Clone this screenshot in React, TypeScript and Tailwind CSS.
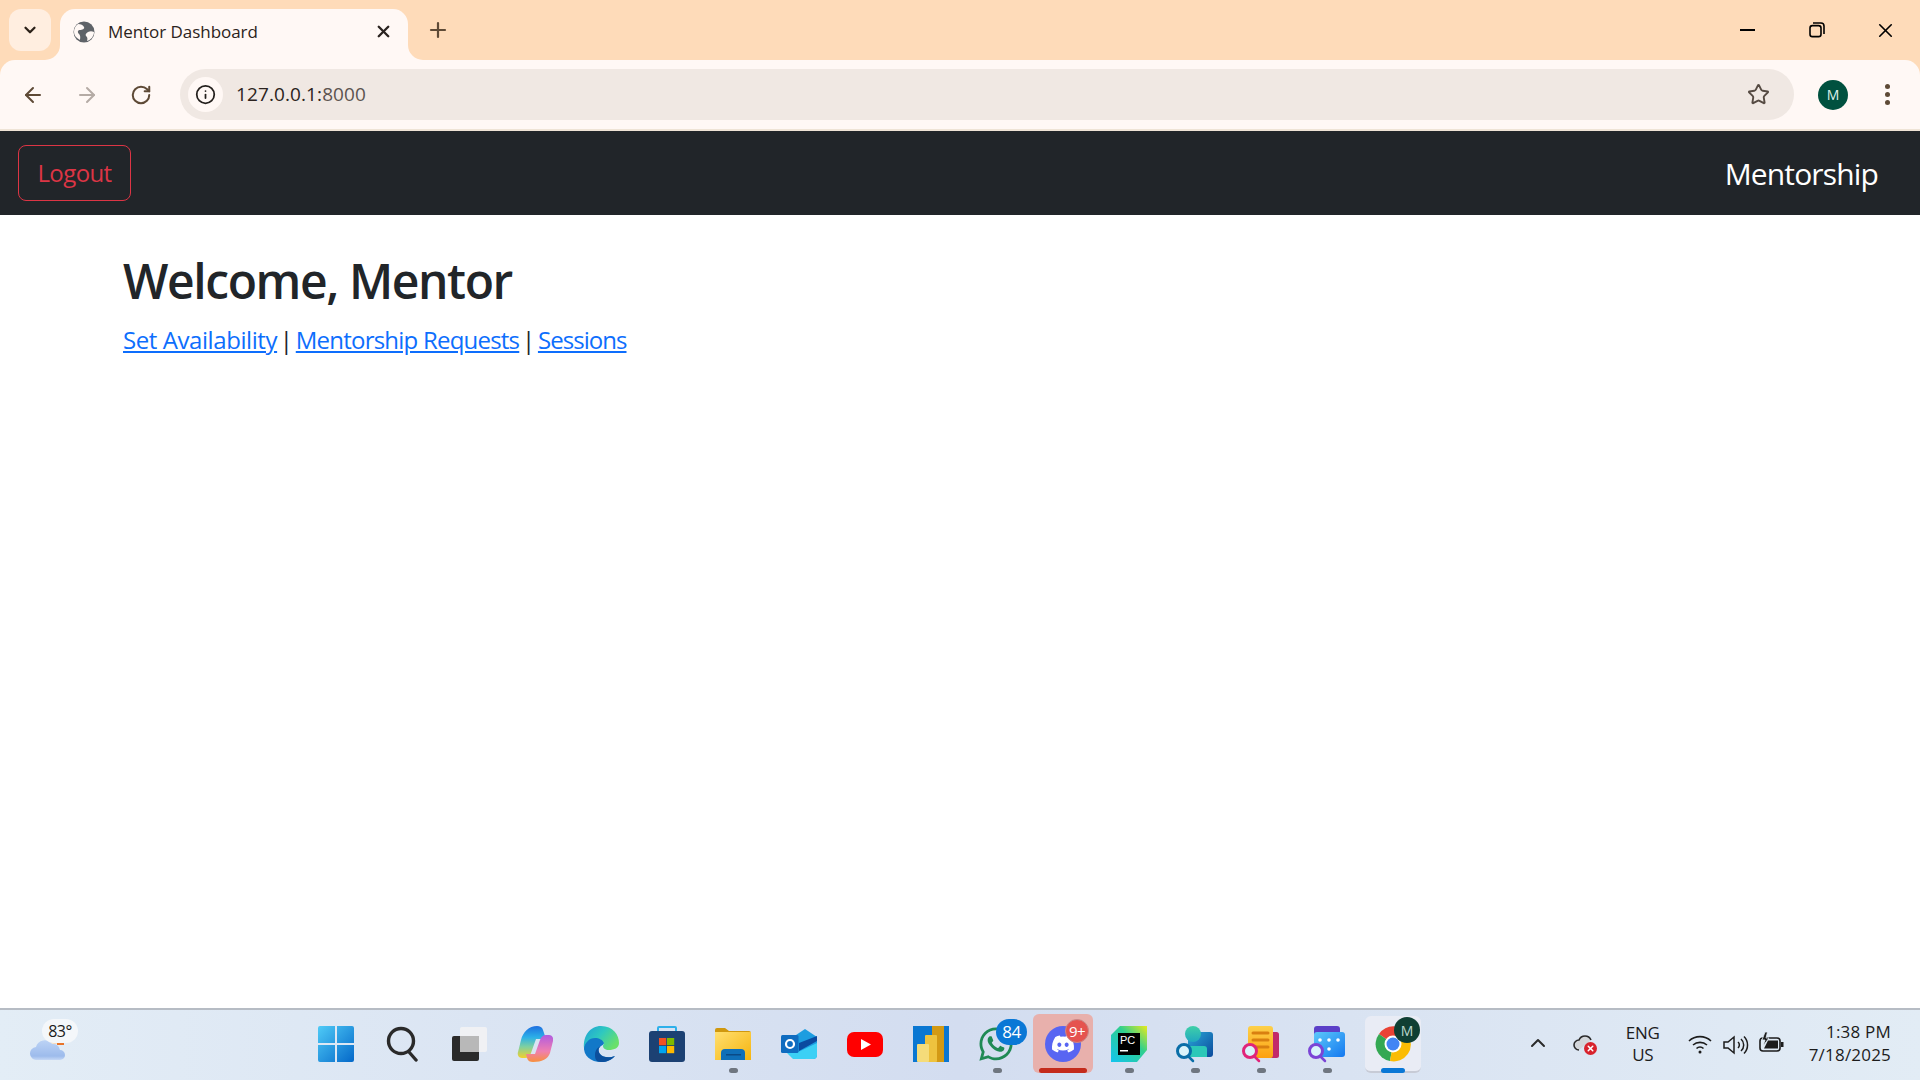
import { ArrowLeft, ArrowRight, ChevronDown, ChevronUp, Info, Plus, RotateCw, Star, X } from 'lucide-react';
import { FaDiscord, FaWhatsapp } from 'react-icons/fa';
import type { ReactNode } from 'react';

function Globe() {
  return (
    <svg width="22" height="22" viewBox="0 0 22 22">
      <circle cx="11" cy="11" r="10.5" fill="#5f6368" />
      <path d="M5 3c3 0 5 1 6 3s-2 3-4 3-3 2-1 4 1 5 1 6c-4-2-6-5-6-8s1-6 4-8zM21 11c-2-1-4-1-6 0s-3 3-2 4 2 2 1 5c4-1 7-5 7-9z" fill="#fff8f5" />
    </svg>
  );
}

function TaskIcon({ children, dot }: { children: ReactNode; dot?: boolean }) {
  return (
    <div className="relative flex h-full w-[66px] shrink-0 items-center justify-center pb-[2px]">
      {children}
      {dot && <span className="absolute bottom-[7px] left-[29px] h-[5px] w-[9px] rounded-full bg-[#6f7680]" />}
    </div>
  );
}

function SearchDoc({ color, children }: { color: string; children: ReactNode }) {
  return (
    <svg width="42" height="42" viewBox="0 0 42 42">
      {children}
      <circle cx="10" cy="28" r="6.5" fill="#d9f3fb" stroke={color} strokeWidth="3" />
      <path d="M14 33l5 5" stroke={color} strokeWidth="2.500" strokeLinecap="round" />
    </svg>
  );
}

export default function App() {
  return (
    <div className="flex h-[1080px] w-[1920px] flex-col overflow-hidden bg-white font-['Open_Sans',sans-serif] text-[#212529]">
      {/* tab strip */}
      <div className="flex h-[60px] shrink-0 items-end bg-[#fedbb9] pl-[9px]">
        <div className="mb-[9px] flex h-[42px] w-[42px] items-center justify-center rounded-[12px] bg-[#ffeee0]">
          <ChevronDown size={18} strokeWidth={3} className="text-[#2b2118]" />
        </div>
        <div className="relative ml-[9px] flex h-[51px] w-[348px] items-center rounded-t-[15px] bg-[#fff8f5] pb-[6px] pl-[13px] pr-[15px]">
          <svg width="15" height="15" viewBox="0 0 15 15" className="absolute bottom-0 left-[-15px]">
            <path d="M15 0v15H0A15 15 0 0 0 15 0z" fill="#fff8f5" />
          </svg>
          <Globe />
          <span className="ml-[13px] flex-1 text-[17px] tracking-[-0.05px] text-[#2b2320]">Mentor Dashboard</span>
          <X size={19} strokeWidth={3} className="text-[#2b2320]" />
          <svg width="15" height="15" viewBox="0 0 15 15" className="absolute bottom-0 right-[-15px]">
            <path d="M0 0v15h15A15 15 0 0 1 0 0z" fill="#fff8f5" />
          </svg>
        </div>
        <div className="mb-[9px] ml-[21px] flex h-[42px] w-[18px] items-center justify-center">
          <Plus size={24} strokeWidth={2.2} className="shrink-0 text-[#5e4a36]" />
        </div>
        <div className="mb-[9px] ml-auto flex h-[42px] items-center">
          <div className="flex w-[69px] justify-center"><div className="h-[2px] w-[15px] bg-black" /></div>
          <div className="flex w-[69px] justify-center">
            <svg width="16" height="16" viewBox="0 0 16 16" fill="none" stroke="#000" strokeWidth="1.6">
              <rect x="1" y="3.6" width="11" height="11" rx="2.4" />
              <path d="M4 1h8a3 3 0 0 1 3 3v8" />
            </svg>
          </div>
          <div className="flex w-[69px] justify-center"><X size={23} strokeWidth={1.7} className="text-black" /></div>
        </div>
      </div>

      {/* toolbar */}
      <div className="shrink-0 bg-[#fedbb9]">
        <div className="flex h-[71px] items-center rounded-t-[15px] border-b-2 border-[#efe4d6] bg-[#fff8f5]">
          <div className="flex w-[180px] items-center text-[#5e4a36]">
            <div className="flex w-[66px] justify-center"><ArrowLeft size={24} strokeWidth={2} /></div>
            <div className="flex w-[42px] justify-center"><ArrowRight size={24} strokeWidth={2} className="text-[#b5aba5]" /></div>
            <div className="flex w-[66px] justify-center"><RotateCw size={22} strokeWidth={2.2} /></div>
          </div>
          <div className="flex h-[51px] w-[1614px] items-center rounded-full bg-[#f0e8e3] pl-[8px] pr-[24px]">
            <div className="flex h-[35px] w-[35px] items-center justify-center rounded-full bg-[#fff8f5]">
              <Info size={21} strokeWidth={2} className="text-[#231f1c]" />
            </div>
            <span className="ml-[13px] flex-1 text-[19px] tracking-[0.1px] text-[#2b2320]">127.0.0.1:<span className="text-[#5c5450]">8000</span></span>
            <Star size={23} strokeWidth={2} className="text-[#554a42]" />
          </div>
          <div className="ml-[24px] flex h-[30px] w-[30px] items-center justify-center rounded-full bg-[#00513f] text-[14px] text-[#dff1ea]">M</div>
          <div className="ml-[37px] flex flex-col gap-[3px]">
            <span className="h-[5px] w-[5px] rounded-full bg-[#5e4a36]" />
            <span className="h-[5px] w-[5px] rounded-full bg-[#5e4a36]" />
            <span className="h-[5px] w-[5px] rounded-full bg-[#5e4a36]" />
          </div>
        </div>
      </div>

      {/* navbar */}
      <nav className="flex h-[84px] shrink-0 items-center justify-between bg-[#212529] pl-[18px] pr-[42px]">
        <button className="flex h-[56px] w-[113px] items-center justify-center rounded-[8px] border border-[#dc3545] text-[24px] tracking-[-0.6px] text-[#dc3545]">Logout</button>
        <span className="text-[30px] tracking-[-0.85px] text-white">Mentorship</span>
      </nav>

      {/* page */}
      <main className="flex-1 pl-[123px] pt-[30px]">
        <h1 className="text-[48px] font-semibold leading-[72px] tracking-[-1.4px]">Welcome, Mentor</h1>
        <p className="mt-[5px] text-[24px] leading-[36px]">
          <a href="#" className="tracking-[-0.42px] text-[#0d6efd] underline">Set Availability</a>
          <span className="[word-spacing:-3.5px]"> | </span>
          <a href="#" className="tracking-[-0.78px] text-[#0d6efd] underline">Mentorship Requests</a>
          <span className="[word-spacing:-3.5px]"> | </span>
          <a href="#" className="tracking-[-0.95px] text-[#0d6efd] underline">Sessions</a>
        </p>
      </main>

      {/* taskbar */}
      <footer className="flex h-[72px] shrink-0 items-center border-t-2 border-[#b6bcc4] bg-gradient-to-r from-[#e3edf6] via-[#d3ddf0] to-[#e2ecf5]">
        <div className="relative h-full w-[304px] shrink-0">
          <svg width="36" height="34" viewBox="0 0 36 34" className="absolute left-[30px] top-[16px]">
            <defs>
              <linearGradient id="cloud" x1="0" y1="0" x2="0" y2="1"><stop offset="0" stopColor="#bcd3f5" /><stop offset="0.8" stopColor="#9dbbec" /><stop offset="1" stopColor="#c5d8f5" /></linearGradient>
            </defs>
            <circle cx="25" cy="9" r="9" fill="#fbd9b5" />
            <rect x="27" y="13" width="7" height="6" fill="#e8742a" />
            <path d="M7 34a6.500 6.500 0 0 1-1-13 9 9 0 0 1 16-3 7 7 0 0 1 8 6 5 5 0 0 1 0 10z" fill="url(#cloud)" />
          </svg>
          <span className="absolute left-[42px] top-[9px] flex h-[24px] w-[36px] items-center justify-center rounded-full bg-[#f4f7fa] text-[16px] tracking-[-0.5px] text-[#1b1b1b]">83°</span>
        </div>

        <div className="flex h-full">
          <TaskIcon>
            <svg width="36" height="36" viewBox="0 0 36 36" className="mr-[2px]">
              <defs>
                <linearGradient id="win" x1="0" y1="0" x2="1" y2="1"><stop offset="0" stopColor="#4fcbf7" /><stop offset="1" stopColor="#0468c9" /></linearGradient>
              </defs>
              <path d="M2 0h15v17H0V2a2 2 0 0 1 2-2zM19 0h15a2 2 0 0 1 2 2v15H19zM0 19h17v17H2a2 2 0 0 1-2-2zM19 19h17v15a2 2 0 0 1-2 2H19z" fill="url(#win)" />
            </svg>
          </TaskIcon>
          <TaskIcon>
            <svg width="36" height="36" viewBox="0 0 36 36" fill="none" stroke="#2a2a2a" strokeWidth="3.4" strokeLinecap="round">
              <circle cx="16" cy="15" r="12.5" />
              <path d="M24 26l7 8" />
            </svg>
          </TaskIcon>
          <TaskIcon>
            <svg width="36" height="36" viewBox="0 0 36 36">
              <rect x="1" y="10" width="27" height="25" rx="2" fill="#2a2a2a" />
              <rect x="9" y="1" width="27" height="25" rx="2" fill="#f3f3f3" fillOpacity="0.85" />
              <rect x="9" y="10" width="19" height="16" fill="#b8b8b8" />
            </svg>
          </TaskIcon>
          <TaskIcon>
            <svg width="36" height="36" viewBox="0 0 36 36">
              <defs>
                <linearGradient id="cop1" x1="0" y1="0" x2="0" y2="1"><stop offset="0" stopColor="#1f6fe0" /><stop offset="0.35" stopColor="#2bb0e8" /><stop offset="0.65" stopColor="#7fd0a0" /><stop offset="1" stopColor="#f2d02c" /></linearGradient>
                <linearGradient id="cop2" x1="0" y1="0" x2="0" y2="1"><stop offset="0" stopColor="#b15be0" /><stop offset="0.6" stopColor="#ef7fb0" /><stop offset="1" stopColor="#f8903c" /></linearGradient>
              </defs>
              <path d="M20 0c3 0 5 1 6 4l3 9H19l-5 14c-1 3-3 5-6 5H5c-3 0-5-3-4-6l3-12C6 6 12 0 20 0z" fill="url(#cop1)" />
              <path d="M16 36c-3 0-5-1-6-4l-1-4h9l5-14c1-3 3-5 6-5h3c3 0 5 3 4 6l-3 12c-2 6-8 9-17 9z" fill="url(#cop2)" />
            </svg>
          </TaskIcon>
          <TaskIcon>
            <svg width="36" height="36" viewBox="0 0 36 36">
              <defs>
                <linearGradient id="edge" x1="0" y1="0" x2="1" y2="0.6"><stop offset="0" stopColor="#1f9fd8" /><stop offset="0.5" stopColor="#2ec8c0" /><stop offset="1" stopColor="#6ae06a" /></linearGradient>
              </defs>
              <path d="M1 20C2 14 7 11 12 11c5 0 9 2 9 6 0 1-1 2-3 3-3 2-3 5-1 8 3 4 10 4 15 2-4 4-8 6-14 6C8 36 0 30 1 20z" fill="#1278c8" />
              <path d="M18 20c-3 2-3 5-1 8 3 4 10 4 15 2-4 4-8 6-14 6-5 0-6-3-6-7 0-5 3-8 6-9z" fill="#0c4f9c" />
              <path d="M18 0C30 0 36 9 36 17c0 5-5 7-10 7-4 0-6-2-6-4 0-1 1-2 1-3-1-3-5-5-9-5C6 12 2 17 1 22 0 10 7 0 18 0z" fill="url(#edge)" />
            </svg>
          </TaskIcon>
          <TaskIcon>
            <svg width="36" height="36" viewBox="0 0 36 36">
              <path d="M9 5V2a1 1 0 0 1 1-1h16a1 1 0 0 1 1 1v3" fill="none" stroke="#2eb0ea" strokeWidth="2" />
              <path d="M3 5h30a3 3 0 0 1 3 3v25a3 3 0 0 1-3 3H3a3 3 0 0 1-3-3V8a3 3 0 0 1 3-3z" fill="#1c4173" />
              <rect x="10" y="12" width="7.200" height="7.200" fill="#f25022" />
              <rect x="18" y="12" width="7.200" height="7.200" fill="#7fba00" />
              <rect x="10" y="20" width="7.200" height="7.200" fill="#00a4ef" />
              <rect x="18" y="20" width="7.200" height="7.200" fill="#ffb900" />
            </svg>
          </TaskIcon>
          <TaskIcon dot>
            <svg width="36" height="32" viewBox="0 0 36 32">
              <defs>
                <linearGradient id="folder" x1="0" y1="0" x2="1" y2="1"><stop offset="0" stopColor="#ffdf70" /><stop offset="1" stopColor="#f6b40e" /></linearGradient>
              </defs>
              <path d="M0 2a2 2 0 0 1 2-2h8l4 3h20a2 2 0 0 1 2 2v3H0z" fill="#d0980e" />
              <path d="M0 4h36v28H0z" fill="url(#folder)" />
              <path d="M6 32v-7a4 4 0 0 1 4-4h16a4 4 0 0 1 4 4v7z" fill="#0f6fb8" />
              <rect x="11" y="26" width="15" height="1.500" fill="#0a4a86" />
            </svg>
          </TaskIcon>
          <TaskIcon>
            <svg width="36" height="30" viewBox="0 0 36 30">
              <path d="M12 8L24 0l12 8v18a4 4 0 0 1-4 4H12z" fill="#1c9de0" />
              <path d="M18 14l18-7v5l-18 10z" fill="#0a4aa0" />
              <path d="M6 24h9l21-10v12a4 4 0 0 1-4 4H12z" fill="#3bd0f5" />
              <rect x="0" y="6" width="17.500" height="18" rx="1.500" fill="#0f6cc0" />
              <circle cx="9" cy="15" r="4" fill="none" stroke="#fff" strokeWidth="2.200" />
            </svg>
          </TaskIcon>
          <TaskIcon>
            <svg width="36" height="25" viewBox="0 0 36 25">
              <rect width="36" height="25" rx="7" fill="#ff0000" />
              <path d="M14 7l10 5.500-10 5.500z" fill="#fff" />
            </svg>
          </TaskIcon>
          <TaskIcon>
            <svg width="36" height="36" viewBox="0 0 36 36">
              <rect width="36" height="36" fill="#0a77d2" />
              <rect x="19" width="12" height="36" fill="#d39a14" />
              <rect x="12" y="9" width="12" height="27" rx="1" fill="#eec33e" />
              <rect x="4" y="18" width="12" height="18" rx="1" fill="#f5dc7a" />
            </svg>
          </TaskIcon>
          <TaskIcon dot>
            <FaWhatsapp size={38} className="mr-[2px] text-[#1f8a55]" />
            <span className="absolute left-[32px] top-[9px] flex h-[26px] w-[31px] items-center justify-center rounded-full bg-[#0a78d6] text-[17px] tracking-[-0.5px] text-white">84</span>
          </TaskIcon>
          <TaskIcon>
            <div className="absolute bottom-[7px] left-[3px] top-[4px] w-[60px] rounded-[6px] bg-[#e8b0ac]" />
            <div className="relative flex h-[36px] w-[36px] items-center justify-center rounded-full bg-[#5865f2]">
              <FaDiscord size={24} className="text-white" />
            </div>
            <span className="absolute left-[35px] top-[9px] flex h-[24px] w-[24px] items-center justify-center rounded-full border border-[#c98a8a] bg-[#e5534f] text-[15px] tracking-[-0.5px] text-white">9+</span>
            <span className="absolute bottom-[7px] left-[9px] h-[5px] w-[48px] rounded-full bg-[#c42b1c]" />
          </TaskIcon>
          <TaskIcon dot>
            <svg width="36" height="36" viewBox="0 0 36 36">
              <defs>
                <linearGradient id="pc" x1="0" y1="1" x2="1" y2="0"><stop offset="0" stopColor="#12c4f0" /><stop offset="0.6" stopColor="#2fcf8f" /><stop offset="1" stopColor="#e8ea1c" /></linearGradient>
              </defs>
              <path d="M9 0h27v24l-10 12H0V9z" fill="url(#pc)" />
              <rect x="7" y="7" width="22" height="22" fill="#000" />
              <text x="9" y="18" fontSize="11" fill="#fff" fontFamily="'Liberation Sans',sans-serif">PC</text>
              <rect x="9" y="24" width="8" height="1.500" fill="#fff" />
            </svg>
          </TaskIcon>
          <TaskIcon dot>
            <SearchDoc color="#0a6ea8">
              <defs>
                <linearGradient id="person" x1="0" y1="0" x2="1" y2="1"><stop offset="0" stopColor="#2aa8d8" /><stop offset="1" stopColor="#0b4a9c" /></linearGradient>
                <linearGradient id="head" x1="0" y1="0" x2="0" y2="1"><stop offset="0" stopColor="#3fd0a8" /><stop offset="1" stopColor="#20a8c0" /></linearGradient>
              </defs>
              <path d="M14 9h22a3 3 0 0 1 3 3v19a3 3 0 0 1-3 3H14z" fill="url(#person)" />
              <path d="M16 23h14a3 3 0 0 1 3 3v8H16z" fill="#2cc8b8" />
              <circle cx="19" cy="11" r="8" fill="url(#head)" />
            </SearchDoc>
          </TaskIcon>
          <TaskIcon dot>
            <SearchDoc color="#e0247a">
              <defs>
                <linearGradient id="doc" x1="0" y1="0" x2="0" y2="1"><stop offset="0" stopColor="#fdd04a" /><stop offset="1" stopColor="#fda010" /></linearGradient>
              </defs>
              <rect x="30" y="9" width="9" height="26" rx="2.500" fill="#c22a6a" />
              <rect x="8" y="3" width="25" height="32" rx="3" fill="url(#doc)" />
              <path d="M13 10h15M13 17h15M13 24h15" stroke="#d98010" strokeWidth="3" strokeLinecap="round" />
            </SearchDoc>
          </TaskIcon>
          <TaskIcon dot>
            <SearchDoc color="#7b45d6">
              <defs>
                <linearGradient id="cal" x1="0" y1="0" x2="1" y2="1"><stop offset="0" stopColor="#5cc8fa" /><stop offset="1" stopColor="#1478f0" /></linearGradient>
              </defs>
              <rect x="8" y="3" width="26" height="12" rx="3" fill="#5b3fc8" />
              <rect x="8" y="9" width="31" height="25" rx="3" fill="url(#cal)" />
              <circle cx="14" cy="17" r="1.800" fill="#fff" />
              <circle cx="23" cy="17" r="1.800" fill="#fff" />
              <circle cx="32" cy="17" r="1.800" fill="#fff" />
              <circle cx="23" cy="26" r="1.800" fill="#fff" />
            </SearchDoc>
          </TaskIcon>
          <TaskIcon>
            <div className="absolute bottom-[7px] left-[5px] top-[6px] w-[56px] rounded-[6px] border-b-2 border-[#c7cbd6] bg-[#e9ecf5]" />
            <svg width="38" height="38" viewBox="0 0 38 38" className="relative">
              <path d="M19 19L5 9a17 17 0 0 1 29 1z" fill="#e94335" />
              <path d="M19 19L5 9a17 17 0 0 0 11 27z" fill="#34a853" />
              <path d="M19 19l15-9a17 17 0 0 1-18 26z" fill="#fbbc04" />
              <circle cx="19" cy="19" r="8.500" fill="#fff" />
              <circle cx="19" cy="19" r="6.500" fill="#4285f4" />
            </svg>
            <span className="absolute left-[34px] top-[7px] flex h-[26px] w-[26px] items-center justify-center rounded-full bg-[#0f3f33] text-[14px] text-[#bcd8cd]">M</span>
            <span className="absolute bottom-[7px] left-[21px] h-[5px] w-[24px] rounded-full bg-[#0a78d6]" />
          </TaskIcon>
        </div>

        {/* tray */}
        <div className="ml-auto flex h-full items-center text-[#1c1c1c]">
          <ChevronUp size={24} strokeWidth={2} className="mb-[4px] text-[#2a2a2a]" />
          <div className="relative ml-[23px] h-[20px] w-[26px]">
            <svg width="22" height="16" viewBox="0 0 22 16" fill="#d3d6da" stroke="#2a2a2a" strokeWidth="1.600">
              <path d="M6 15a5 5 0 0 1 0-10 6.500 6.500 0 0 1 12 0" />
            </svg>
            <span className="absolute left-[11px] top-[7px] flex h-[13px] w-[13px] items-center justify-center rounded-full bg-[#d8222c] text-white">
              <X size={9} strokeWidth={4} />
            </span>
          </div>
          <div className="ml-[14px] flex w-[60px] flex-col items-center pb-[2px] text-[17px] leading-[22px] tracking-[-0.3px]">
            <span>ENG</span>
            <span>US</span>
          </div>
          <svg width="26" height="22" viewBox="0 0 26 22" fill="none" stroke="#1c1c1c" strokeWidth="1.600" className="mb-[3px] ml-[14px]">
            <path d="M2 8a16 16 0 0 1 22 0M6 12a10.500 10.500 0 0 1 14 0M9.500 15.500a5 5 0 0 1 7 0" />
            <circle cx="13" cy="19" r="1.500" fill="#1c1c1c" stroke="none" />
          </svg>
          <svg width="26" height="22" viewBox="0 0 26 22" fill="none" stroke="#1c1c1c" strokeWidth="1.500" className="mb-[1px] ml-[10px]">
            <path d="M1 8v6h4l6 5V3L5 8zM15 8a4 4 0 0 1 0 6M18 5a8 8 0 0 1 0 12M21 2.500a12 12 0 0 1 0 17" />
          </svg>
          <svg width="26" height="22" viewBox="0 0 26 22" className="mb-[5px] ml-[10px]">
            <rect x="1" y="6" width="20" height="13" rx="3" fill="none" stroke="#1c1c1c" strokeWidth="1.600" />
            <path d="M9 8.500h10v8H5z" fill="#1c1c1c" />
            <rect x="22" y="10" width="2.500" height="5" fill="#1c1c1c" />
            <path d="M6 0L3 8h3l-2 6 6-8H7l1.500-6z" fill="#1c1c1c" stroke="#e3edf6" strokeWidth="0.800" />
          </svg>
          <div className="ml-[24px] mr-[29px] flex flex-col items-end pb-[5px] text-[17px] leading-[23px] tracking-[0.2px]">
            <span>1:38 PM</span>
            <span>7/18/2025</span>
          </div>
        </div>
      </footer>
    </div>
  );
}
